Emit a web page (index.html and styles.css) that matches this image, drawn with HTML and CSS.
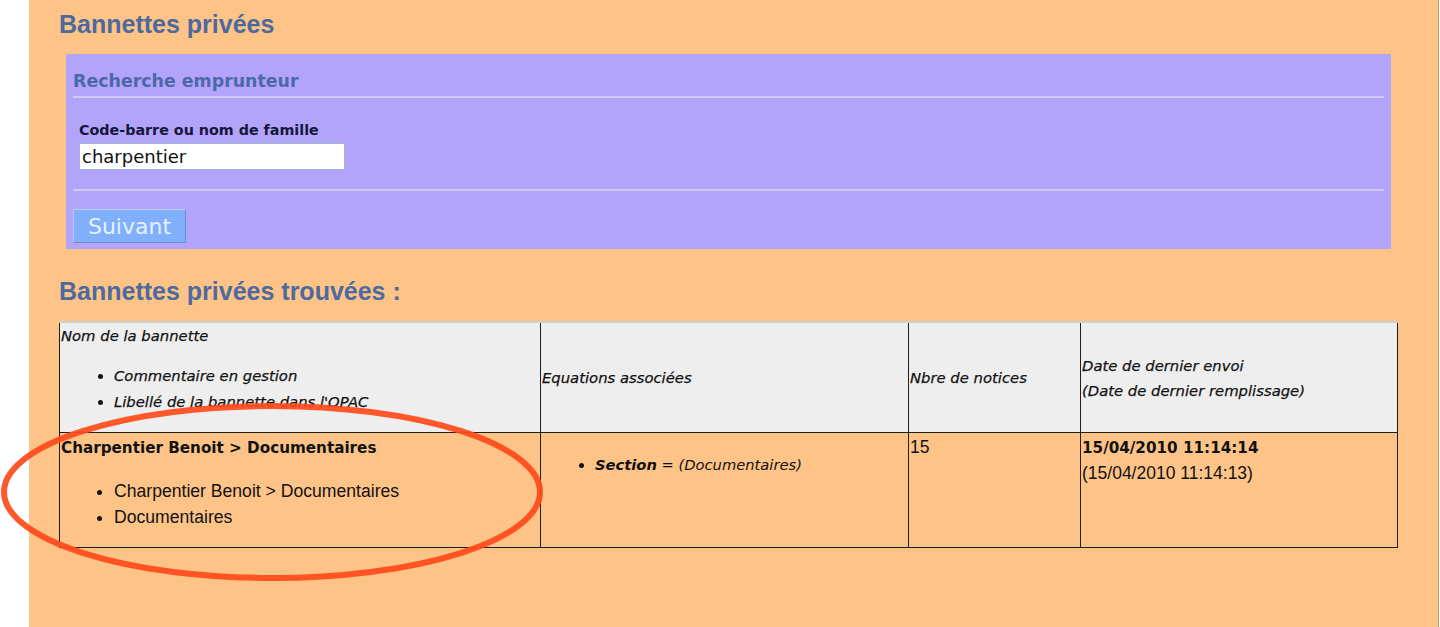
FILE: index.html
```html
<!DOCTYPE html>
<html lang="fr">
<head>
<meta charset="utf-8">
<title>Bannettes privées</title>
<link rel="stylesheet" href="styles.css">
</head>
<body>
<div class="page">
  <h1 class="title">Bannettes privées</h1>
  <form class="search">
    <h3 class="search-title">Recherche emprunteur</h3>
    <hr class="sep">
    <div class="field">
      <label class="field-label" for="q">Code-barre ou nom de famille</label>
      <input class="field-input" id="q" type="text" value="charpentier">
    </div>
    <hr class="sep sep-bottom">
    <button class="btn" type="button">Suivant</button>
  </form>
  <h2 class="title title-results">Bannettes privées trouvées :</h2>
  <table class="results">
    <colgroup><col class="c1"><col class="c2"><col class="c3"><col class="c4"></colgroup>
    <thead>
      <tr>
        <th class="th-first">Nom de la bannette<ul class="list list-head"><li>Commentaire en gestion</li><li>Libellé de la bannette dans l'OPAC</li></ul></th>
        <th>Equations associées</th>
        <th>Nbre de notices</th>
        <th>Date de dernier envoi<br>(Date de dernier remplissage)</th>
      </tr>
    </thead>
    <tbody>
      <tr>
        <td><span class="strong">Charpentier Benoit &gt; Documentaires</span><ul class="list list-body"><li>Charpentier Benoit &gt; Documentaires</li><li>Documentaires</li></ul></td>
        <td><ul class="list list-eq"><li><b>Section</b> = (Documentaires)</li></ul></td>
        <td>15</td>
        <td><span class="strong">15/04/2010 11:14:14</span><br>(15/04/2010 11:14:13)</td>
      </tr>
    </tbody>
  </table>
</div>
<svg class="annot" width="1440" height="627" viewBox="0 0 1440 627" aria-hidden="true">
  <ellipse cx="272" cy="492" rx="268" ry="86" fill="none" stroke="#ff4a1a" stroke-width="6" opacity="0.92"/>
</svg>
</body>
</html>
```

FILE: styles.css
```css
html, body {
  margin: 0;
  padding: 0;
  background: #ffffff;
}

body {
  position: relative;
  width: 1440px;
  height: 627px;
  overflow: hidden;
  font-family: "Liberation Sans", Arial, sans-serif;
}

.page {
  box-sizing: border-box;
  margin-left: 29px;
  width: 1410px;
  min-height: 627px;
  padding: 10px 0 0 30px;
  background: #fec387;
  border-right: 1px solid #c09a6e;
}

.title {
  margin: 0;
  font-family: "Liberation Sans", Arial, sans-serif;
  font-weight: bold;
  font-size: 25px;
  color: #4d6a9e;
}

.title-results {
  margin-top: 28px;
}

.search {
  box-sizing: border-box;
  width: 1325px;
  margin: 15px 0 0 7px;
  padding: 17px 7px 6px;
  background: #b3a4fb;
}

.search-title {
  margin: 0;
  font-family: "DejaVu Sans", sans-serif;
  font-weight: bold;
  font-size: 17.4px;
  line-height: 20px;
  color: #4d68a8;
}

.sep {
  margin: 5px 0 0;
  border: 0;
  height: 2px;
  background: #d0c8ef;
}

.sep-bottom {
  margin-top: 19px;
}

.field {
  display: flex;
  flex-direction: column;
  align-items: flex-start;
  padding: 23.5px 0 0 6px;
}

.field-label {
  font-family: "DejaVu Sans", sans-serif;
  font-weight: bold;
  font-size: 14.3px;
  line-height: 17px;
  color: #16163a;
}

.field-input {
  box-sizing: border-box;
  margin-top: 4.5px;
  width: 266px;
  height: 27px;
  padding: 0 2px;
  border: 1px solid #a4b4d4;
  background: #ffffff;
  font-family: "DejaVu Sans", sans-serif;
  font-size: 18px;
  color: #111111;
}

.btn {
  box-sizing: border-box;
  display: block;
  margin-top: 18px;
  width: 113px;
  height: 34px;
  padding: 0;
  border: 1px solid;
  border-color: #b4cdfc #6f8fc8 #6f8fc8 #b4cdfc;
  background: #80b0fc;
  font-family: "DejaVu Sans", sans-serif;
  font-size: 22px;
  color: #e6efff;
}

.results {
  margin-top: 15px;
  width: 1338px;
  table-layout: fixed;
  border-collapse: collapse;
  border: 1px solid #1e1e1e;
  border-top: 2px solid #cfcfcf;
  color: #121212;
}

.c1 { width: 481px; }
.c2 { width: 368px; }
.c3 { width: 172px; }
.c4 { width: 317px; }

.results th {
  background: #eeeeee;
  border-left: 1px solid #1e1e1e;
  border-right: 1px solid #1e1e1e;
  border-bottom: 1px solid #1e1e1e;
  padding: 0 1px;
  text-align: left;
  vertical-align: middle;
  font-family: "DejaVu Sans", sans-serif;
  font-style: oblique;
  font-weight: normal;
  font-size: 14.8px;
  line-height: 25px;
  height: 109px;
  -webkit-text-stroke: 0.25px currentColor;
}

.results .th-first {
  vertical-align: top;
}

.results td {
  border: 1px solid #1e1e1e;
  padding: 1.5px 1px 1px;
  vertical-align: top;
  font-family: "Liberation Sans", Arial, sans-serif;
  font-size: 17.5px;
  line-height: 25px;
  height: 110px;
}

.strong {
  font-family: "DejaVu Sans", sans-serif;
  font-weight: bold;
  font-size: 15.2px;
}

.list {
  margin: 17px 0;
  padding-left: 53px;
  line-height: 26px;
}

.list-head {
  margin: 15px 0;
}

.list-body {
  margin: 17px 0 16px;
  font-size: 17.6px;
}

.list-eq {
  font-family: "DejaVu Sans", sans-serif;
  font-style: oblique;
  font-size: 14.7px;
}

.annot {
  position: absolute;
  left: 0;
  top: 0;
  pointer-events: none;
}
```
